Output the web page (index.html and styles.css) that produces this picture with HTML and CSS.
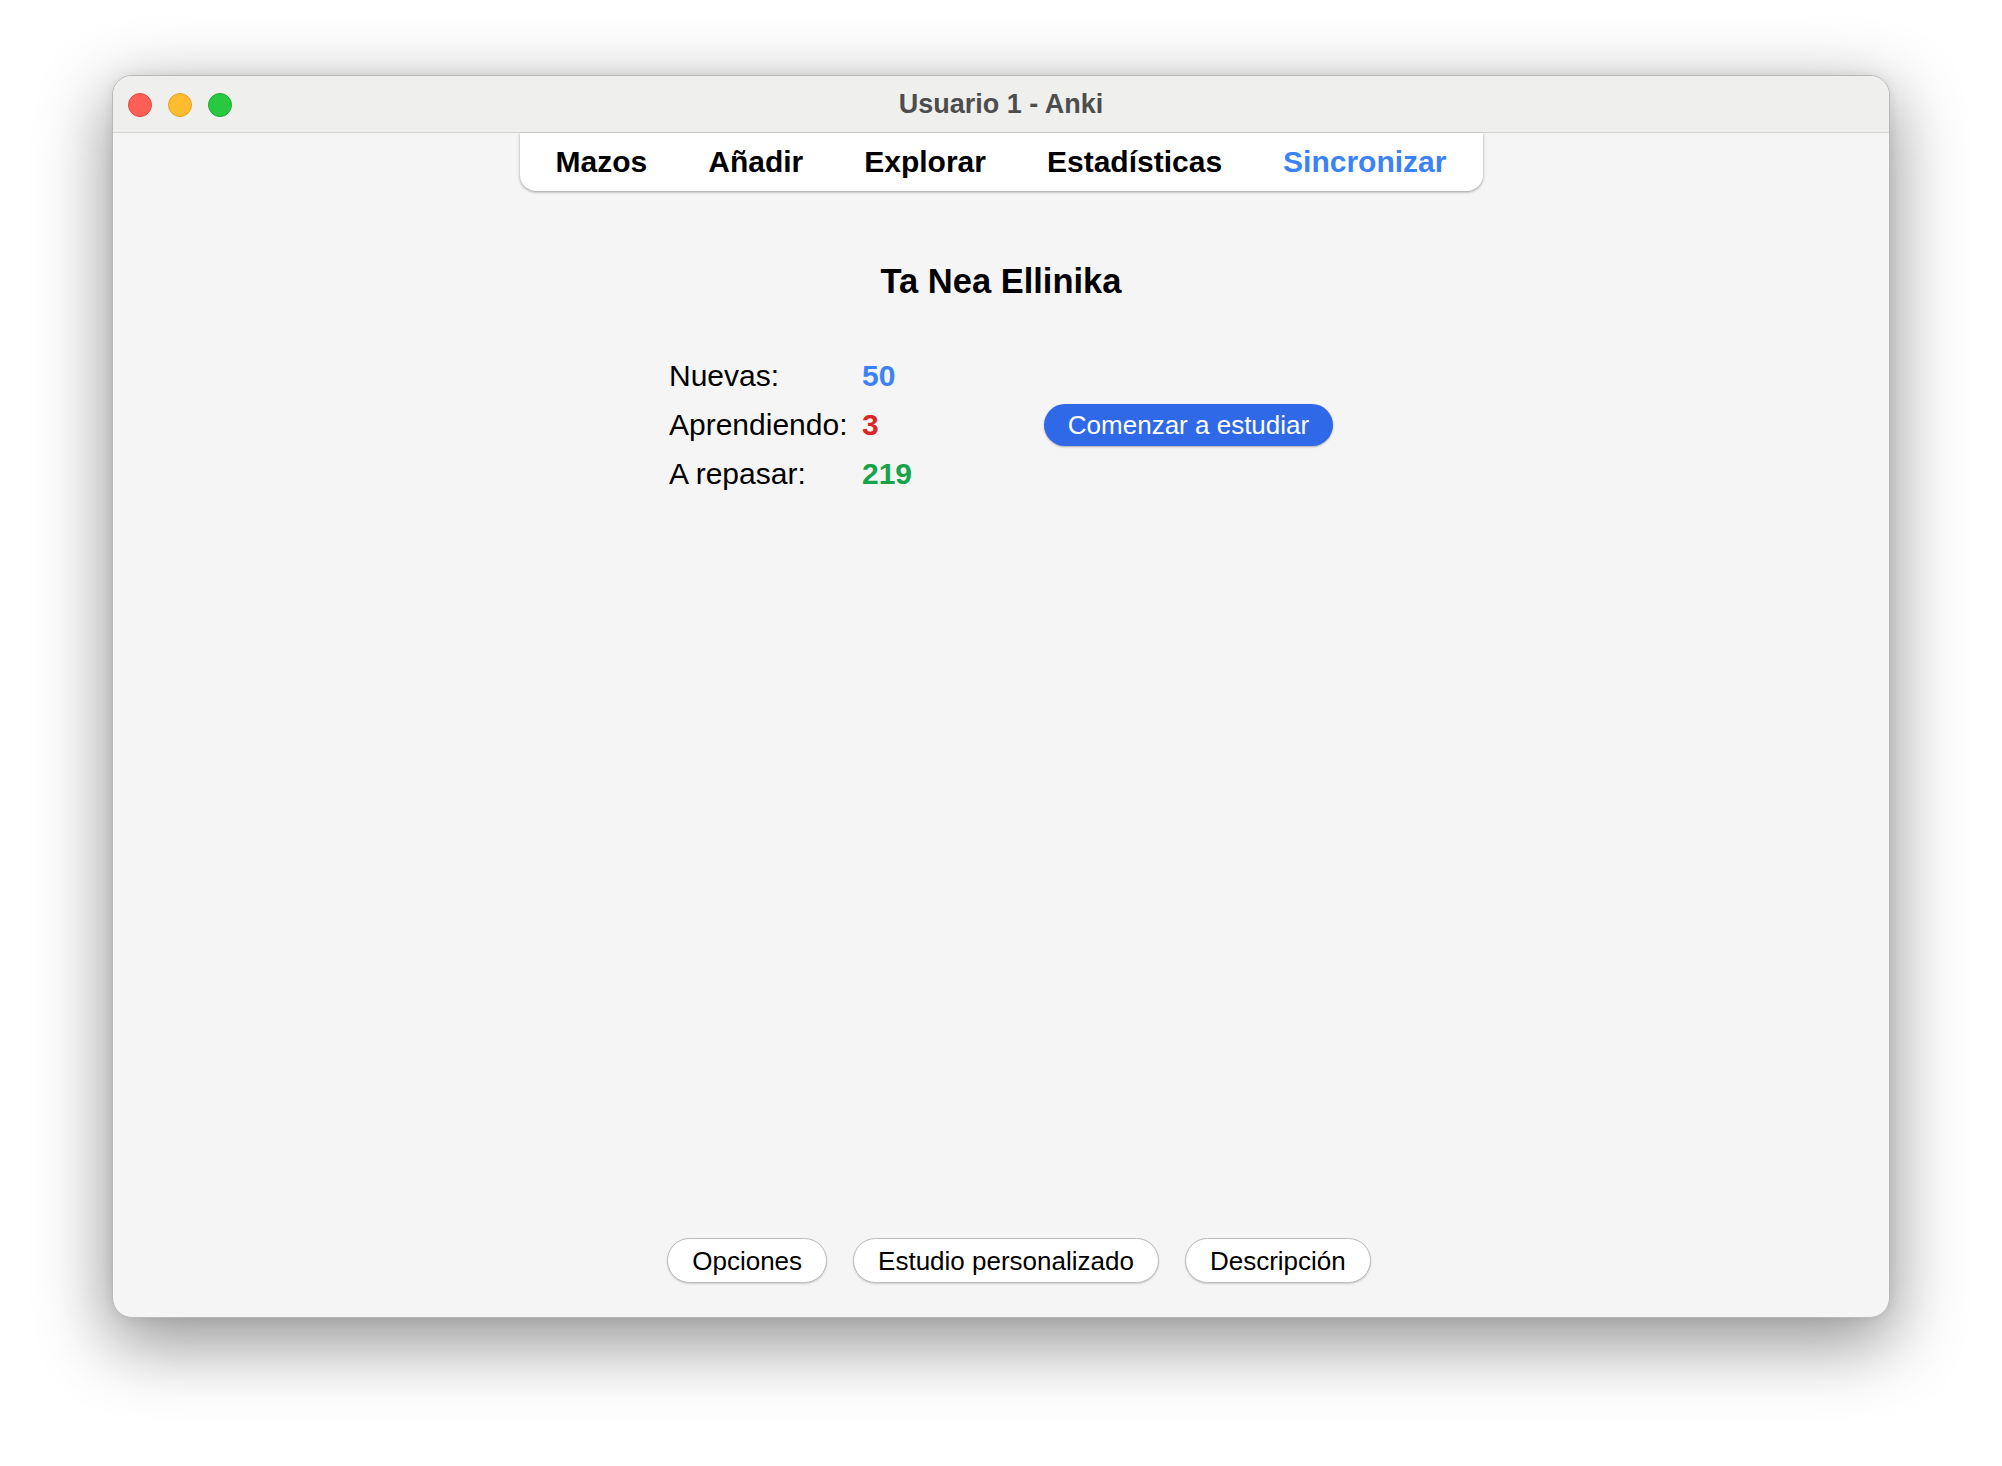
FILE: index.html
```html
<!DOCTYPE html>
<html lang="es">
<head>
<meta charset="utf-8">
<title>Usuario 1 - Anki</title>
<link rel="stylesheet" href="styles.css">
</head>
<body>
<div class="window">
  <div class="titlebar">
    <div class="lights">
      <span class="light red"></span>
      <span class="light yellow"></span>
      <span class="light green"></span>
    </div>
    <div class="wintitle">Usuario 1 - Anki</div>
    <div class="spacer"></div>
  </div>
  <div class="content">
    <nav class="toolbar">
      <a class="tab">Mazos</a>
      <a class="tab">Añadir</a>
      <a class="tab">Explorar</a>
      <a class="tab">Estadísticas</a>
      <a class="tab sync">Sincronizar</a>
    </nav>
    <main class="overview">
      <h1 class="deck">Ta Nea Ellinika</h1>
      <div class="stats">
        <div class="label">Nuevas:</div>
        <div class="num new">50</div>
        <div class="btncell"><button class="study">Comenzar a estudiar</button></div>
        <div class="label">Aprendiendo:</div>
        <div class="num learn">3</div>
        <div class="label">A repasar:</div>
        <div class="num review">219</div>
      </div>
    </main>
    <footer class="bottombar">
      <button class="pill">Opciones</button>
      <button class="pill">Estudio personalizado</button>
      <button class="pill">Descripción</button>
    </footer>
  </div>
</div>
</body>
</html>
```

FILE: styles.css
```css
* { box-sizing: border-box; }

html, body {
  margin: 0;
  padding: 0;
  background: #ffffff;
}

body {
  width: 2002px;
  height: 1466px;
  overflow: hidden;
  font-family: "Liberation Sans", Arial, Helvetica, sans-serif;
}

.window {
  margin: 75px 0 0 112px;
  width: 1778px;
  height: 1243px;
  border: 1px solid #b9b9b9;
  border-radius: 20px;
  background: #f5f5f5;
  box-shadow: 0 22px 70px 4px rgba(0, 0, 0, 0.42), 0 0 12px rgba(0, 0, 0, 0.08);
  display: flex;
  flex-direction: column;
  overflow: hidden;
}

.titlebar {
  height: 57px;
  flex: 0 0 57px;
  background: #efefee;
  border-bottom: 1px solid #d3d3d3;
  display: grid;
  grid-template-columns: 1fr auto 1fr;
  align-items: center;
}

.lights {
  display: flex;
  gap: 16px;
  padding-left: 15px;
}

.light {
  width: 24px;
  height: 24px;
  border-radius: 50%;
  display: block;
}
.light.red { background: #ff5f57; border: 1px solid #e2463f; }
.light.yellow { background: #febc2e; border: 1px solid #e1a325; }
.light.green { background: #28c840; border: 1px solid #1eaa32; }

.wintitle {
  font-weight: bold;
  font-size: 27px;
  color: #4d4d4d;
  line-height: 56px;
  padding-bottom: 1px;
}

.content {
  flex: 1;
  display: flex;
  flex-direction: column;
  align-items: center;
}

.toolbar {
  display: flex;
  gap: 61px;
  padding: 12px 36px;
  background: #ffffff;
  border-radius: 0 0 16px 16px;
  box-shadow: 0 1px 3px rgba(0, 0, 0, 0.38);
  width: 963px;
  justify-content: center;
}

.tab {
  font-size: 30px;
  font-weight: bold;
  line-height: 34px;
  color: #000000;
  white-space: nowrap;
}
.tab.sync { color: #3b82f6; }

.overview {
  display: flex;
  flex-direction: column;
  align-items: center;
  width: 100%;
}

.deck {
  margin: 70px 0 0;
  font-size: 34.5px;
  line-height: 40px;
  font-weight: bold;
  color: #000000;
}

.stats {
  margin-top: 50px;
  display: grid;
  grid-template-columns: 193px 182px 289px;
  grid-template-rows: repeat(3, 49px);
  font-size: 30px;
  line-height: 49px;
}

.label { color: #000000; white-space: nowrap; }
.num { font-weight: bold; }
.num.new { color: #3b82f6; }
.num.learn { color: #dc2626; }
.num.review { color: #16a34a; }

.btncell {
  grid-column: 3;
  grid-row: 1 / span 3;
  align-self: center;
  display: flex;
}

.study {
  height: 42px;
  width: 289px;
  padding: 0;
  border: none;
  border-radius: 21px;
  background: #3069e8;
  color: #ffffff;
  font-family: "Liberation Sans", Arial, sans-serif;
  font-size: 26px;
  line-height: 42px;
  box-shadow: 0 1px 2px rgba(0, 0, 0, 0.3);
}

.bottombar {
  margin-top: auto;
  padding: 0 0 34px 36px;
  display: flex;
  gap: 26px;
  justify-content: center;
}

.pill {
  height: 45px;
  padding: 2px 24px 0;
  background: #ffffff;
  border: 1px solid #bcbcbc;
  border-radius: 23px;
  color: #000000;
  font-family: "Liberation Sans", Arial, sans-serif;
  font-size: 26px;
  line-height: 41px;
  box-shadow: 0 1px 2px rgba(0, 0, 0, 0.18);
  white-space: nowrap;
}
```
